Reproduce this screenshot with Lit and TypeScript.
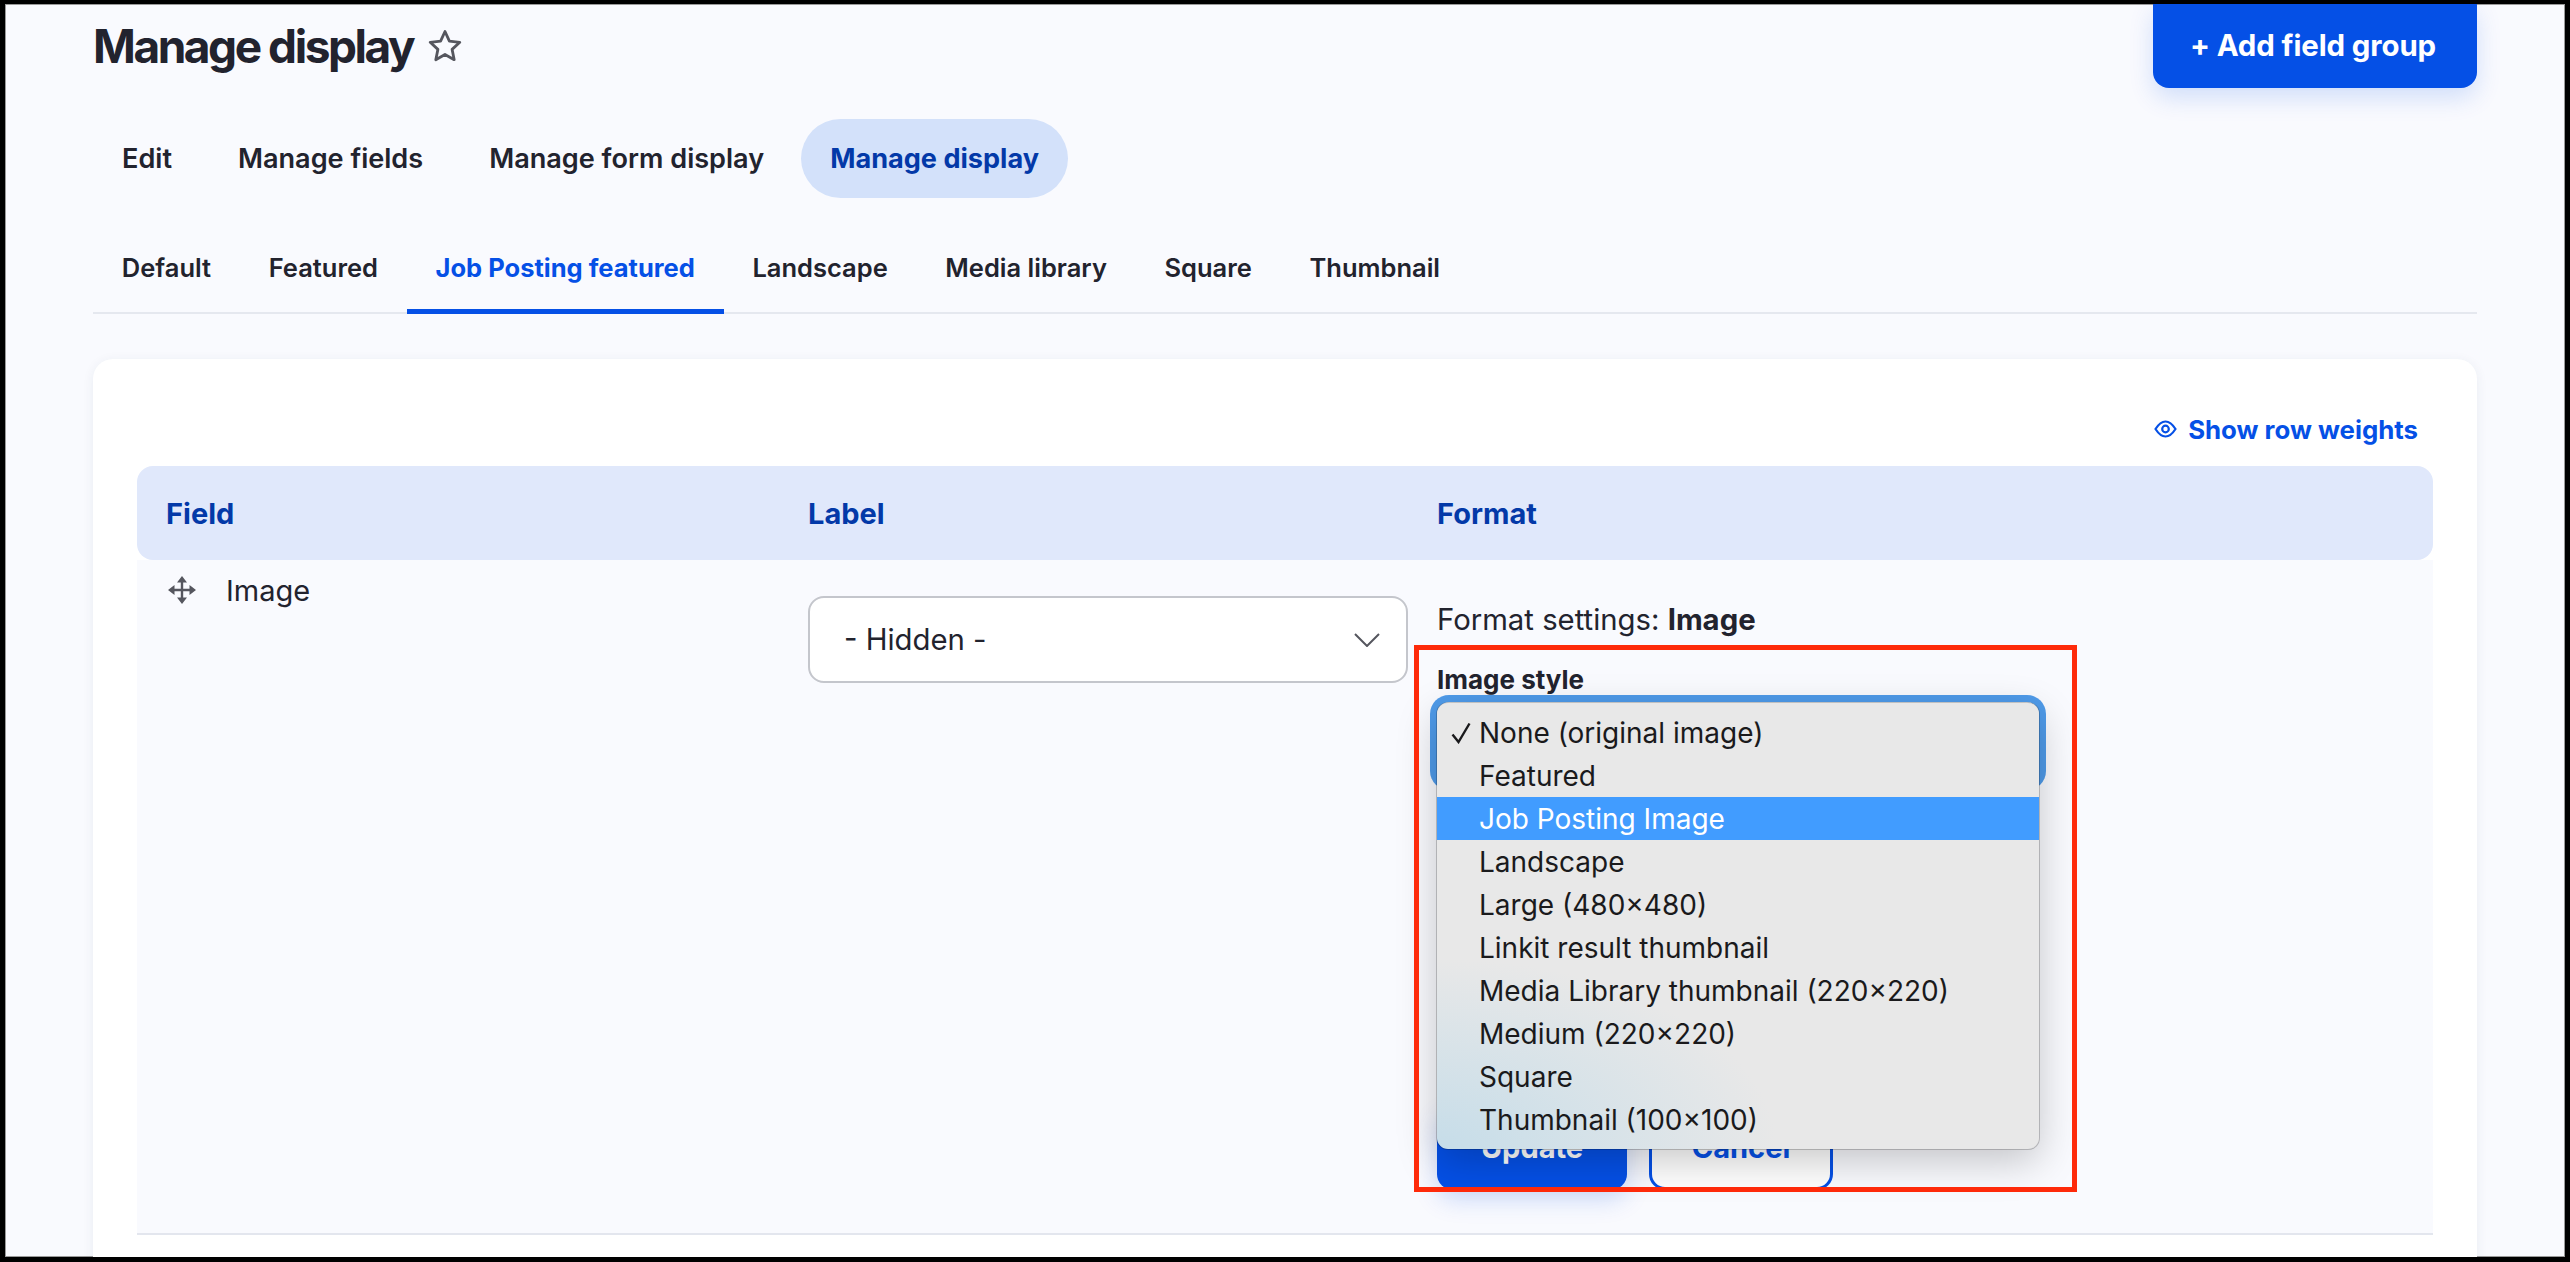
import { LitElement, html, css, svg } from 'lit';
import { customElement, property } from 'lit/decorators.js';
import { classMap } from 'lit/directives/class-map.js';

const primaryTabs = ['Edit', 'Manage fields', 'Manage form display', 'Manage display'];
const secondaryTabs = ['Default', 'Featured', 'Job Posting featured', 'Landscape', 'Media library', 'Square', 'Thumbnail'];
const imageStyles = [
  'None (original image)',
  'Featured',
  'Job Posting Image',
  'Landscape',
  'Large (480×480)',
  'Linkit result thumbnail',
  'Media Library thumbnail (220×220)',
  'Medium (220×220)',
  'Square',
  'Thumbnail (100×100)',
];

const starIcon = svg`<path d="M17 2.5l4.4 9.6 10.4 1.2-7.7 7.1 2.1 10.3L17 25.5l-9.2 5.2 2.1-10.3-7.7-7.1 10.4-1.2z" fill="none" stroke="currentColor" stroke-width="2.8" stroke-linejoin="round"/>`;
const eyeIcon = svg`<path d="M1.5 11C5 5.5 8 3.5 11.5 3.5S18 5.5 21.5 11C18 16.5 15 18.5 11.5 18.5S5 16.5 1.5 11z" fill="none" stroke="currentColor" stroke-width="2.2"/><circle cx="11.5" cy="11" r="3.3" fill="none" stroke="currentColor" stroke-width="2.2"/>`;
const moveIcon = svg`<path d="M14 3v22M3 14h22" fill="none" stroke="currentColor" stroke-width="2.4"/><path d="M14 0l5 6.500h-10zM14 28l-5-6.500h10zM0 14l6.500-5v10zM28 14l-6.500 5v-10z" fill="currentColor"/>`;
const chevronIcon = svg`<path d="M1 1l12 12L25 1" fill="none" stroke="currentColor" stroke-width="2"/>`;
const checkIcon = svg`<path d="M1.5 12.5l6 7.5L18.5 1.5" fill="none" stroke="currentColor" stroke-width="2.4"/>`;

@customElement('app-root')
export class AppRoot extends LitElement {
  @property({ type: String }) primaryActive = 'Manage display';
  @property({ type: String }) secondaryActive = 'Job Posting featured';
  @property({ type: String }) highlighted = 'Job Posting Image';

  static styles = css`
    :host {
      display: block;
      font-family: Inter, 'Noto Sans', sans-serif;
      color: #22232e;
    }

    .frame {
      box-sizing: border-box;
      width: 2570px;
      height: 1262px;
      border-style: solid;
      border-color: #000;
      border-width: 4px 5px 5px 5px;
      overflow: hidden;
      background: #f9fafe;
      box-shadow: inset 0 0 0 1px #9a9a9a;
      padding: 0 88px;
    }

    .head {
      display: flex;
      justify-content: space-between;
      height: 115px;
    }

    .title {
      display: flex;
      align-items: center;
      gap: 15px;
      height: 84px;
    }

    h1 {
      margin: 0;
      font-size: 46px;
      font-weight: 700;
      letter-spacing: -2.45px;
      line-height: 60px;
    }

    .star {
      width: 34px;
      height: 34px;
      color: #55565e;
    }

    .add {
      box-sizing: border-box;
      width: 324px;
      height: 85px;
      margin-top: -1px;
      padding-right: 4px;
      display: flex;
      align-items: center;
      justify-content: center;
      background: #0550e6;
      color: #fff;
      border-radius: 0 0 16px 16px;
      font-size: 29.4px;
      font-weight: 700;
      letter-spacing: -0.1px;
      box-shadow: 0 10px 24px rgba(5, 80, 230, 0.16);
    }

    .primary {
      display: flex;
      height: 79px;
    }

    .primary a {
      display: flex;
      align-items: center;
      padding: 0 29px;
      margin-right: 8px;
      border-radius: 40px;
      font-size: 27.1px;
      font-weight: 600;
    }

    .primary a.active {
      background: #d3e1fa;
      color: #0339a8;
      font-weight: 700;
    }

    .secondary {
      display: flex;
      height: 116px;
      border-bottom: 2px solid #e5e8ef;
      box-sizing: border-box;
    }

    .secondary a {
      display: flex;
      align-items: center;
      padding: 28px 28.8px 0;
      margin-bottom: -2px;
      font-size: 25.5px;
      font-weight: 600;
      border-bottom: 5px solid transparent;
    }

    .secondary a.active {
      color: #0550e6;
      border-bottom-color: #0550e6;
      font-weight: 700;
    }

    .card {
      margin-top: 45px;
      height: 920px;
      background: #fff;
      border-radius: 20px 20px 0 0;
      padding: 0 44px;
      box-shadow: 0 2px 12px rgba(30, 50, 90, 0.07);
    }

    .weights {
      display: flex;
      justify-content: flex-end;
      align-items: center;
      gap: 11px;
      height: 107px;
      padding: 33px 15px 0 0;
      box-sizing: border-box;
      color: #0550e6;
      font-size: 25.8px;
      font-weight: 700;
    }

    .weights svg {
      width: 23px;
      height: 22px;
    }

    .cols {
      display: grid;
      grid-template-columns: 642px 629px 1fr;
    }

    .table-head {
      height: 94px;
      align-items: center;
      background: #e0e8fb;
      border-radius: 16px;
      color: #0339a8;
      font-size: 29px;
      font-weight: 700;
    }

    .table-head div {
      padding-left: 29px;
    }

    .table-row {
      height: 675px;
      box-sizing: border-box;
      background: #f9fafe;
      border-bottom: 2px solid #e3e6ee;
      font-size: 29px;
    }

    .field {
      display: flex;
      align-items: flex-start;
      gap: 30px;
      padding: 15px 0 0 31px;
      line-height: 31px;
    }

    .field svg {
      width: 28px;
      height: 28px;
      margin-top: 1px;
      color: #55565e;
    }

    .label-cell {
      padding: 36px 0 0 29px;
    }

    .select {
      box-sizing: border-box;
      display: flex;
      align-items: center;
      justify-content: space-between;
      height: 87px;
      padding: 0 26px 0 34px;
      background: #fff;
      border: 2px solid #c4c6cc;
      border-radius: 16px;
      font-size: 29.3px;
    }

    .select svg {
      width: 26px;
      height: 14px;
      color: #55565e;
    }

    .format {
      position: relative;
      padding: 0 0 0 29px;
    }

    .settings {
      padding-top: 44px;
      line-height: 32px;
      font-size: 29.3px;
    }

    .settings b {
      font-weight: 700;
    }

    .style-label {
      margin-top: 29px;
      line-height: 30px;
      font-size: 26px;
      font-weight: 700;
    }

    .style-select {
      box-sizing: border-box;
      width: 602px;
      height: 81px;
      margin-top: 7px;
      background: #fff;
      border-radius: 12px;
      box-shadow: 0 0 0 7px #4f9bea;
    }

    .actions {
      display: flex;
      gap: 22px;
      margin-top: 322px;
    }

    .btn {
      box-sizing: border-box;
      display: flex;
      align-items: center;
      justify-content: center;
      height: 85px;
      border-radius: 16px;
      font-size: 29px;
      font-weight: 700;
    }

    .btn.update {
      width: 190px;
      background: #0550e6;
      color: #fff;
      box-shadow: 0 10px 24px rgba(5, 80, 230, 0.18);
    }

    .btn.cancel {
      width: 184px;
      border: 3px solid #0550e6;
      color: #0550e6;
      background: #fff;
    }

    /* native popup list, sits over the select and the buttons */
    .menu {
      position: absolute;
      left: 29px;
      top: 143px;
      width: 602px;
      box-sizing: border-box;
      padding: 8px 0;
      border-radius: 11px;
      background:
        radial-gradient(ellipse 340px 190px at 0 100%, #c6dde9 0%, rgba(198, 221, 233, 0.55) 45%, rgba(232, 232, 232, 0) 100%),
        #e8e8e8;
      box-shadow: 0 0 0 1px rgba(0, 0, 0, 0.2), 0 12px 40px rgba(0, 0, 0, 0.22);
      color: #1a1a1c;
      font-size: 28px;
    }

    .option {
      position: relative;
      height: 43px;
      line-height: 45px;
      padding-left: 42px;
    }

    .option.highlight {
      background: #419cff;
      color: #fff;
    }

    .option svg {
      position: absolute;
      left: 14px;
      top: 11px;
      width: 20px;
      height: 22px;
    }

    /* red annotation drawn on top of the screenshot */
    .callout {
      position: absolute;
      left: 6px;
      top: 85px;
      width: 663px;
      height: 547px;
      box-sizing: border-box;
      border: 5px solid #fe2a0a;
    }
  `;

  renderMenu() {
    return html`
      <div class="menu">
        ${imageStyles.map(
          (name, i) => html`
            <div class=${classMap({ option: true, highlight: name === this.highlighted })}>
              ${i === 0 ? html`<svg viewBox="0 0 20 22">${checkIcon}</svg>` : ''}${name}
            </div>
          `
        )}
      </div>
    `;
  }

  render() {
    return html`
      <div class="frame">
        <div class="head">
          <div class="title">
            <h1>Manage display</h1>
            <svg class="star" viewBox="0 0 34 34">${starIcon}</svg>
          </div>
          <div class="add">+ Add field group</div>
        </div>

        <nav class="primary">
          ${primaryTabs.map(
            (t) => html`<a class=${classMap({ active: t === this.primaryActive })}>${t}</a>`
          )}
        </nav>

        <nav class="secondary">
          ${secondaryTabs.map(
            (t) => html`<a class=${classMap({ active: t === this.secondaryActive })}>${t}</a>`
          )}
        </nav>

        <section class="card">
          <div class="weights">
            <svg viewBox="0 0 23 22">${eyeIcon}</svg>
            <span>Show row weights</span>
          </div>

          <div class="cols table-head">
            <div>Field</div>
            <div>Label</div>
            <div>Format</div>
          </div>

          <div class="cols table-row">
            <div class="field">
              <svg viewBox="0 0 28 28">${moveIcon}</svg>
              <span>Image</span>
            </div>
            <div class="label-cell">
              <div class="select">
                <span>- Hidden -</span>
                <svg viewBox="0 0 26 14">${chevronIcon}</svg>
              </div>
            </div>
            <div class="format">
              <div class="settings">Format settings: <b>Image</b></div>
              <div class="style-label">Image style</div>
              <div class="style-select"></div>
              <div class="actions">
                <div class="btn update">Update</div>
                <div class="btn cancel">Cancel</div>
              </div>
              ${this.renderMenu()}
              <div class="callout"></div>
            </div>
          </div>
        </section>
      </div>
    `;
  }
}
